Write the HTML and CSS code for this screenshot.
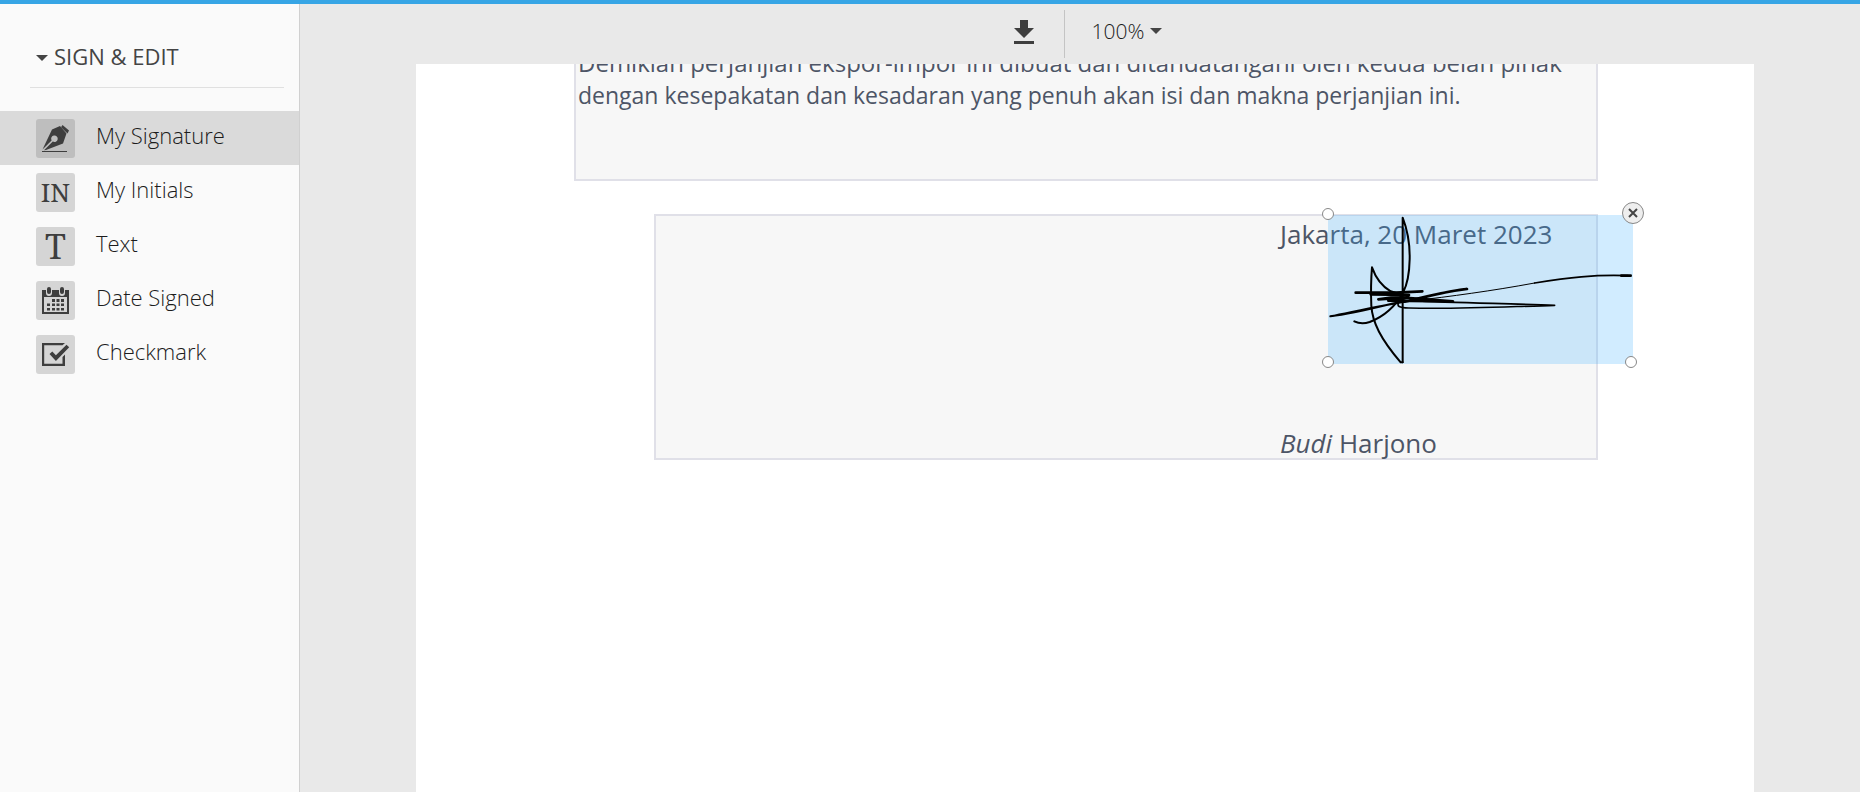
FILE: index.html
```
<!DOCTYPE html>
<html lang="en">
<head>
    <meta charset="UTF-8">
    <meta name="viewport" content="width=device-width, initial-scale=1.0">
    <title>Sign &amp; Edit</title>
    <link rel="stylesheet" href="styles.css">
</head>
<body>
    <div class="app">
        <aside class="sidebar">
            <button class="sidebar-heading">
                <svg class="caret" viewBox="0 0 12 6"><path d="M0 0h12L6 6z"/></svg>
                <span>SIGN &amp; EDIT</span>
            </button>

            <nav class="tools">
                <button class="tool active">
                    <span class="tool-icon">
                        <svg viewBox="0 0 39 39">
                            <path d="M6 32h25v1H6z"/>
                            <path d="M16 10.500 24 7l6.500 7.500L27 24.500 10 31l-2 .3 8.800-8.700a3.300 3.300 0 1 0-1.200-1.200L6.500 30.500z"/>
                            <path d="m26.500 6 6.500 5.500-1.500 3L25 8.200z"/>
                        </svg>
                    </span>
                    <span class="tool-label">My Signature</span>
                </button>
                <button class="tool">
                    <span class="tool-icon letters">IN</span>
                    <span class="tool-label">My Initials</span>
                </button>
                <button class="tool">
                    <span class="tool-icon letters letter-big">T</span>
                    <span class="tool-label">Text</span>
                </button>
                <button class="tool">
                    <span class="tool-icon">
                        <svg viewBox="0 0 39 39">
                            <path fill-rule="evenodd" d="M6 9h27v24H6zM8 16v15h23V16z"/>
                            <path class="ring-gap" d="M13 8v4M26 8v4"/>
                            <path class="ring" d="M13 8v3M26 8v3"/>
                            <path d="M16 18h3v3h-3zM20.500 18h3v3h-3zM25 18h3v3h-3zM11 22.500h3v2.500h-3zM16 22.500h3v2.500h-3zM20.500 22.500h3v2.500h-3zM25 22.500h3v2.500h-3zM11 27h3v2.500h-3zM16 27h3v2.500h-3zM20.500 27h3v2.500h-3zM25 27h3v2.500h-3z"/>
                        </svg>
                    </span>
                    <span class="tool-label">Date Signed</span>
                </button>
                <button class="tool">
                    <span class="tool-icon">
                        <svg viewBox="0 0 39 39">
                            <path d="M6 8h23l-2.500 2.200H8.200v18.600h18.300V22l2.500-2.500V31H6z"/>
                            <path d="m13.500 19 2.800-2.600 3.600 3.800L30.500 9.800l2.700 2.500L19.900 26z"/>
                        </svg>
                    </span>
                    <span class="tool-label">Checkmark</span>
                </button>
            </nav>
        </aside>

        <main class="viewer">
            <div class="toolbar">
                <button class="download" aria-label="Download">
                    <svg viewBox="0 0 20 24"><path d="M6 0h8v8h6L10 18 0 8h6zM0 21h20v3H0z"/></svg>
                </button>
                <label class="zoom">
                    <select class="zoom-select" aria-label="Zoom">
                        <option>100%</option>
                        <option>150%</option>
                        <option>200%</option>
                    </select>
                    <svg class="caret" viewBox="0 0 12 6"><path d="M0 0h12L6 6z"/></svg>
                </label>
            </div>

            <div class="pages">
                <article class="page" lang="id">
                    <section class="block closing">
                        <p class="lead">Demikian perjanjian ekspor-impor ini dibuat dan ditandatangani oleh kedua belah pihak</p>
                        <p>dengan kesepakatan dan kesadaran yang penuh akan isi dan makna perjanjian ini.</p>
                    </section>

                    <section class="block signing">
                        <div class="signer">
                            <p>Jakarta, 20 Maret 2023</p>
                            <p><em>Budi</em> Harjono</p>
                        </div>

                        <div class="signature">
                            <svg class="signature-ink" viewBox="0 0 915 447">
                                <path d="M224 442V8c14 36 22 80 21 125-1 50-12 85-20 100-25 45-60 72-100 88-18 6-34 4-46-2"/>
                                <path d="M224 442h-6c-60-70-85-120-88-170-2-50-1-80 2-115 12 34 32 58 56 72l35 10"/>
                                <path class="bold" d="M83 233h120l80-4M128 238l115 2-92 13 90-6-60 10 194 2-130-10"/>
                                <path class="bold" d="M230 260c70-14 130-34 187-38-50 6-100 16-170 34"/>
                                <path d="M7 304c70-14 150-32 223-44M7 304c80-10 150-30 220-46"/>
                                <path class="medium" d="M212 262c-6 12 0 16 30 17 150 4 290-4 438-8-130-6-290-6-430-14"/>
                                <path class="thin" d="M250 258c120-14 240-30 370-54"/>
                                <path class="medium" d="M620 204c100-16 180-26 280-22"/>
                                <path class="bold" d="M880 182h28"/>
                            </svg>
                            <span class="handle top-left"></span>
                            <span class="handle bottom-left"></span>
                            <span class="handle bottom-right"></span>
                            <button class="remove" aria-label="Remove signature">
                                <svg viewBox="0 0 10 10"><path d="m1 1 8 8M9 1 1 9"/></svg>
                            </button>
                        </div>
                    </section>
                </article>
            </div>
        </main>
    </div>
</body>
</html>
```
FILE: styles.css
```
* {
    margin: 0;
    padding: 0;
    box-sizing: border-box;
}

body {
    font-family: "Open Sans", sans-serif;
    color: #444;
    background-color: #e9e9e9;
}

button,
select {
    font: inherit;
    color: inherit;
    background: none;
    border: none;
    cursor: pointer;
}

.app {
    display: flex;
    height: 100vh;
    border-top: 4px solid #37a5e5;
}

/* Sidebar */
.sidebar {
    flex: 0 0 300px;
    background-color: #fafafa;
    border-right: 1px solid #d0d0d0;
}

.sidebar-heading {
    display: flex;
    align-items: center;
    gap: 6px;
    width: 254px;
    margin: 21px 0 23px 30px;
    padding: 16px 6px;
    font-size: 22px;
    line-height: 30px;
    border-bottom: 1px solid #e0e0e0;
}

.caret {
    width: 12px;
    height: 6px;
    fill: #444;
}

.sidebar-heading .caret {
    margin-top: 3px;
}

.tool {
    display: flex;
    align-items: center;
    gap: 21px;
    width: 100%;
    height: 54px;
    padding-left: 36px;
    font-size: 22px;
    font-weight: 300;
    color: #1c1c1c;
    text-align: left;
}

.tool-label {
    padding-bottom: 6px;
}

.tool.active {
    background-color: #dadada;
}

.tool-icon {
    display: flex;
    align-items: center;
    justify-content: center;
    width: 39px;
    height: 39px;
    border-radius: 3px;
    background-color: #d5d5d5;
}

.active .tool-icon {
    background-color: #bebebe;
}

.tool-icon svg {
    width: 39px;
    height: 39px;
    fill: #3e3e3e;
}

.ring,
.ring-gap {
    stroke: #3e3e3e;
    stroke-width: 4;
    stroke-linecap: round;
}

.ring-gap {
    stroke: #d5d5d5;
    stroke-width: 6;
}

.letters {
    font-family: "Noto Serif", "Liberation Serif", serif;
    font-size: 26px;
    font-weight: 400;
    color: #3e3e3e;
}

.letter-big {
    font-size: 34px;
}

/* Viewer */
.viewer {
    flex: 1;
    display: flex;
    flex-direction: column;
    min-width: 0;
}

.toolbar {
    display: flex;
    justify-content: center;
    padding: 6px 0;
    padding-left: 15px;
}

.download {
    padding: 0 30px 4px;
    height: 48px;
    border-right: 1px solid #c4c4c4;
}

.download svg {
    display: block;
    width: 20px;
    height: 24px;
    fill: #3e3e3e;
}

.zoom {
    display: flex;
    align-items: center;
    padding: 0 30px 6px 27px;
}

.zoom-select {
    width: 58px;
    appearance: none;
    font-size: 21px;
    font-weight: 300;
    line-height: 30px;
    color: #1c1c1c;
}

.pages {
    flex: 1;
    padding: 0 106px 0 116px;
    overflow: hidden;
}

.page {
    min-height: 100%;
    padding: 0 156px 0 158px;
    background-color: #fff;
    display: flow-root;
}

.block {
    border: 2px solid #e0e0e8;
    background-color: #f7f7f7;
    color: #4d5566;
    font-size: 26px;
    line-height: 33px;
}

/* Scrolled partly under the toolbar */
.closing {
    margin-top: -20px;
    padding: 0 2px 67px;
    font-size: 23px;
}

.lead {
    font-size: 24px;
}

.signing {
    position: relative;
    margin: 33px 0 0 80px;
}

.signer {
    display: flex;
    flex-direction: column;
    justify-content: space-between;
    width: 316px;
    height: 244px;
    margin: 0 0 -2px auto;
    padding-top: 2px;
}

/* Placed signature, floating above the document */
.signature {
    position: absolute;
    top: -1px;
    right: -37px;
    width: 305px;
    height: 149px;
    background-color: rgba(56, 173, 255, 0.23);
}

.signature-ink {
    display: block;
    width: 100%;
    height: 100%;
    fill: none;
    stroke: #000;
    stroke-width: 6;
    stroke-linecap: round;
    stroke-linejoin: round;
}

.bold {
    stroke-width: 8;
}

.medium {
    stroke-width: 5;
}

.thin {
    stroke-width: 3;
}

.handle {
    position: absolute;
    width: 12px;
    height: 12px;
    border: 1px solid #888;
    border-radius: 50%;
    background-color: #fff;
}

.top-left {
    top: -7px;
    left: -6px;
}

.bottom-left {
    bottom: -4px;
    left: -6px;
}

.bottom-right {
    right: -4px;
    bottom: -4px;
}

.remove {
    position: absolute;
    top: -13px;
    right: -11px;
    display: flex;
    align-items: center;
    justify-content: center;
    width: 22px;
    height: 22px;
    border: 1px solid #888;
    border-radius: 50%;
    background-color: #eee;
}

.remove svg {
    width: 10px;
    height: 10px;
    stroke: #444;
    stroke-width: 2;
}
```
